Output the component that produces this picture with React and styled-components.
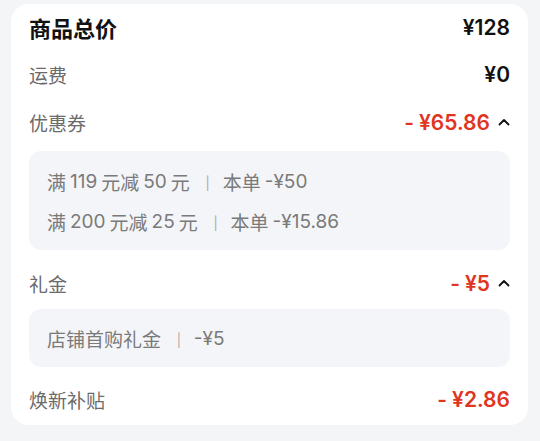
import React from 'react';
import styled, { createGlobalStyle } from 'styled-components';

const GlobalStyle = createGlobalStyle`
  html, body {
    margin: 0;
    padding: 0;
    background: #f4f5f7;
  }
  body {
    font-family: Inter, "Noto Sans CJK SC", sans-serif;
  }
`

const Page = styled.div`
  padding: 4px 12px 16px 11px;
`

const Card = styled.div`
  background: #fff;
  border-radius: 18px;
  padding: 0 18px 2px 18px;
  display: flex;
  flex-direction: column;
`

const Row = styled.div`
  display: flex;
  align-items: center;
  justify-content: space-between;
  height: ${p => (p.head ? 46 : 48)}px;
`

const Label = styled.span`
  font-size: ${p => (p.head ? 22 : 19)}px;
  font-weight: ${p => (p.head ? 600 : 400)};
  color: ${p => (p.head ? '#111' : '#6b6b6b')};
  font-family: "Noto Sans CJK SC", sans-serif;
`

const Amount = styled.span`
  display: flex;
  align-items: center;
  gap: 8px;
  font-size: 21px;
  font-weight: 600;
  color: ${p => (p.red ? '#e0351f' : '#111')};
`

const Minus = styled.span`
  margin-right: 5px;
`

const Detail = styled.div`
  background: #f4f5f8;
  border-radius: 12px;
  padding: ${p => (p.single ? '9px' : '10px')} 18px 9px 18px;
  margin: ${p => (p.single ? '2px 0 8px' : '5px 0 9px')};
  display: flex;
  flex-direction: column;
`

const Line = styled.div`
  height: 40px;
  display: flex;
  align-items: center;
  font-size: 19px;
  color: #7a7a7a;
  font-family: "Noto Sans CJK SC", sans-serif;
  span.num {
    font-family: Inter, sans-serif;
    margin: 0 4px;
  }
`

const Sep = styled.span`
  color: #a0a0a0;
  font-size: 14px;
  margin: 0 13px 0 16px;
`

const Chevron = () => (
  <svg width="12" height="8" viewBox="0 0 12 8">
    <polyline points="1.5,6.5 6,2 10.5,6.5" fill="none" stroke="#111" strokeWidth="1.8" strokeLinecap="round" strokeLinejoin="round" />
  </svg>
);

const Price = ({ red, value, arrow }) => (
  <Amount red={red}>
    <span>
      {red && <Minus>-</Minus>}
      ¥{value}
    </span>
    {arrow && <Chevron />}
  </Amount>
);

const App = () => {
  return (
    <Page>
      <GlobalStyle />
      <Card>
        <Row head>
          <Label head>商品总价</Label>
          <Price value="128" />
        </Row>
        <Row>
          <Label>运费</Label>
          <Price value="0" />
        </Row>
        <Row>
          <Label>优惠券</Label>
          <Price red value="65.86" arrow />
        </Row>
        <Detail>
          <Line>
            满<span className="num">119</span>元减<span className="num">50</span>元<Sep>|</Sep>本单 <span className="num">-¥50</span>
          </Line>
          <Line>
            满<span className="num">200</span>元减<span className="num">25</span>元<Sep>|</Sep>本单 <span className="num">-¥15.86</span>
          </Line>
        </Detail>
        <Row>
          <Label>礼金</Label>
          <Price red value="5" arrow />
        </Row>
        <Detail single>
          <Line>
            店铺首购礼金<Sep>|</Sep><span className="num" style={{ marginLeft: 0 }}>-¥5</span>
          </Line>
        </Detail>
        <Row>
          <Label>焕新补贴</Label>
          <Price red value="2.86" />
        </Row>
      </Card>
    </Page>
  );
};

export default App;
